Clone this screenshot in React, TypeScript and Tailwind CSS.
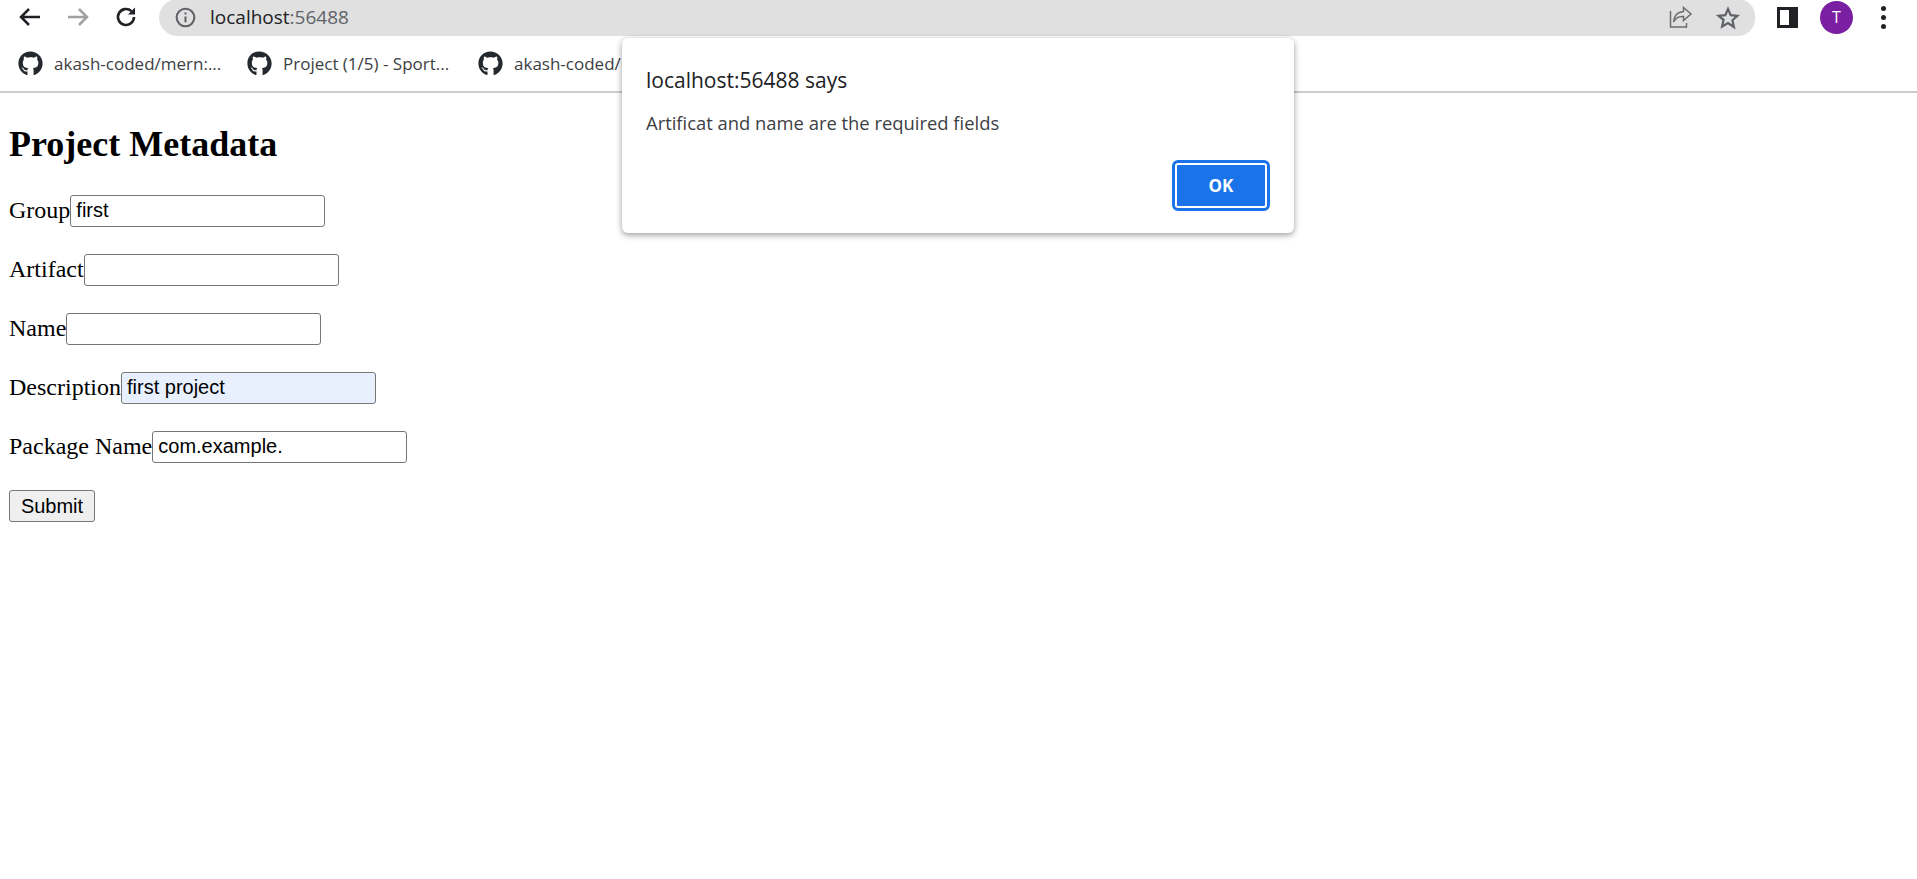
import React from "react";
import { FaGithub } from "react-icons/fa";

const ui = "font-['Open_Sans','Noto_Sans',sans-serif]";

function Field({ label, value, autofill }: { label: string; value?: string; autofill?: boolean }) {
  return (
    <div className="flex items-center h-[32px] mb-[27px]">
      <span className="text-[24px] leading-[32px] text-black -mt-[3px]">{label}</span>
      <div
        className={`w-[255px] h-[32px] border border-[#767676] rounded-[3px] px-[5px] text-[20px] leading-[29px] text-black font-['Liberation_Sans',sans-serif] ${
          autofill ? "bg-[#e8f0fe]" : "bg-white"
        }`}
      >
        {value}
      </div>
    </div>
  );
}

function Bookmark({ text, width }: { text: string; width: string }) {
  return (
    <div className={`flex items-center gap-[11px] ${width}`}>
      <FaGithub className="text-[#24292f] w-[25px] h-[25px] shrink-0" />
      <span className="text-[17px] text-[#3c4043] whitespace-nowrap">{text}</span>
    </div>
  );
}

export default function App() {
  return (
    <div className="relative w-[1917px] h-[879px] bg-white overflow-hidden font-['Liberation_Serif',serif]">
      <div className={`h-[37px] flex items-start bg-white ${ui}`}>
        <div className="w-[159px] h-[36px] flex items-center pl-[18px] gap-[24px] shrink-0 pb-[3px]">
          <svg width="24" height="24" viewBox="0 0 24 24" fill="none" stroke="#202124" strokeWidth="2.5">
            <path d="M22 12H3M11 4l-8 8 8 8" />
          </svg>
          <svg width="24" height="24" viewBox="0 0 24 24" fill="none" stroke="#a0a0a0" strokeWidth="2.5">
            <path d="M2 12h19M13 4l8 8-8 8" />
          </svg>
          <svg width="24" height="24" viewBox="0 0 24 24" fill="none" stroke="#202124" strokeWidth="2.6">
            <path d="M20 12a8 8 0 1 1-2.6-5.9" />
            <path d="M21 2.5v7h-7" fill="#202124" stroke="none" />
          </svg>
        </div>
        <div className="w-[1596px] h-[37px] -mt-[1px] bg-[#e0e0e0] rounded-r-[22px] rounded-l-[24px] flex items-center pl-[16px] pr-[15px] shrink-0">
          <svg width="21" height="21" viewBox="0 0 20 20" fill="none" stroke="#5f6368" strokeWidth="2">
            <circle cx="10" cy="10" r="8.4" />
            <path d="M10 9v5.500M10 5.200v2" />
          </svg>
          <span className="ml-[14px] text-[19px] text-[#202124]">
            localhost<span className="text-[#5f6368]">:56488</span>
          </span>
          <div className="ml-auto flex items-center gap-[23px]">
            <svg width="25" height="25" viewBox="0 0 25 25" fill="none" stroke="#6b6b6b" strokeWidth="1.5">
              <path d="M2.500 6v16h16v-4" />
              <path d="M15.500 2.500l7.500 6.500-7.500 6.500v-4C11 11 7.500 13 5.500 17c.5-6 4-10 10-10.500z" />
            </svg>
            <svg width="24" height="24" viewBox="0 0 24 24" fill="none" stroke="#5f6368" strokeWidth="2.200">
              <path d="M12 3l2.700 6.200 6.800.6-5.100 4.500 1.500 6.700L12 17l-5.900 3.500 1.500-6.700L2.500 9.800l6.800-.6z" />
            </svg>
          </div>
        </div>
        <div className="flex-1 flex items-center h-[34px]">
          <div className="ml-[22px] w-[21px] h-[21px] border-[3px] border-r-[9px] border-[#202124] bg-white shrink-0" />
          <div className="ml-[22px] w-[33px] h-[33px] rounded-full bg-[#7b1fa2] text-white text-[16px] flex items-center justify-center shrink-0">
            T
          </div>
          <div className="ml-[28px] flex flex-col gap-[4px] shrink-0">
            <div className="w-[5px] h-[5px] rounded-full bg-[#202124]" />
            <div className="w-[5px] h-[5px] rounded-full bg-[#202124]" />
            <div className="w-[5px] h-[5px] rounded-full bg-[#202124]" />
          </div>
        </div>
      </div>

      <div className={`h-[56px] border-b-2 border-[#cccccc] flex items-center pl-[18px] pb-[1px] ${ui}`}>
        <Bookmark text="akash-coded/mern:..." width="w-[229px]" />
        <Bookmark text="Project (1/5) - Sport..." width="w-[231px]" />
        <Bookmark text="akash-coded/" width="w-[200px]" />
      </div>

      <div className="pl-[9px]">
        <h2 className="text-[36px] font-bold leading-[41px] mt-[31px] mb-[30px] text-black">Project Metadata</h2>
        <Field label="Group" value="first" />
        <Field label="Artifact" />
        <Field label="Name" />
        <Field label="Description" value="first project" autofill />
        <Field label="Package Name" value="com.example." />
        <button className="w-[86px] h-[32px] pb-[2px] border border-[#767676] rounded-[3px] bg-[#efefef] text-[20px] text-black font-['Liberation_Sans',sans-serif]">
          Submit
        </button>
      </div>

      <div className={`absolute left-[622px] top-[38px] w-[672px] h-[195px] bg-white rounded-[6px] shadow-[0_2px_6px_rgba(0,0,0,0.4)] px-[24px] ${ui}`}>
        <div className="mt-[27px] text-[21px] leading-[30px] text-[#202124]">localhost:56488 says</div>
        <div className="mt-[15px] text-[18.4px] leading-[26px] text-[#3c4043]">Artificat and name are the required fields</div>
        <div className="absolute right-[24px] top-[122px] w-[98px] h-[51px] rounded-[6px] border-[3px] border-[#1a73e8] bg-[#1a73e8]">
          <div className="w-full h-full rounded-[3px] border-2 border-white flex items-center justify-center text-white text-[17px] font-bold">
            OK
          </div>
        </div>
      </div>
    </div>
  );
}
